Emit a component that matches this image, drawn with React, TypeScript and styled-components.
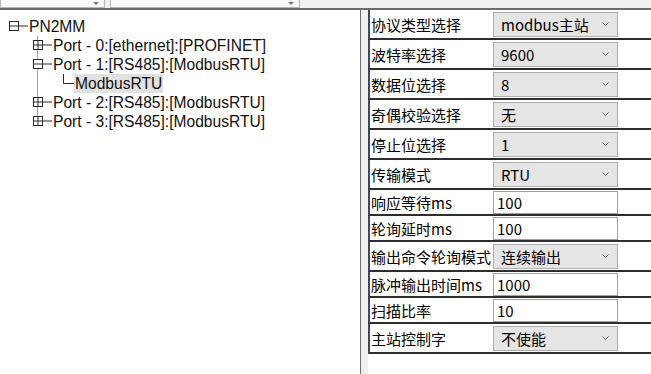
import React from "react";
import styled, { createGlobalStyle } from "styled-components";

const GlobalStyle = createGlobalStyle`
html, body {
  margin: 0;
  padding: 0;
  background: #f0f0f0;
}
body {
  width: 651px;
  height: 374px;
  overflow: hidden;
  font-family: "Noto Sans CJK SC", "Noto Sans", sans-serif;
  color: #000;
}
`

const Window = styled.div`
width: 651px;
height: 374px;
display: flex;
flex-direction: column;
background: #f0f0f0;
`

const TopBar = styled.div`
height: 8px;
display: flex;
gap: 5px;
border-bottom: 2px solid #6d6d6d;
`

const StubCombo = styled.div<{ $w: number }>`
width: ${p => p.$w}px;
height: 8px;
box-sizing: border-box;
background: #fafafa;
border: 1px solid #b4b4b4;
border-top: none;
display: flex;
justify-content: flex-end;
align-items: center;
padding-right: 5px;
`

const StubArrow = styled.span`
width: 0;
height: 0;
border-left: 3px solid transparent;
border-right: 3px solid transparent;
border-top: 3px solid #777;
`

const Body = styled.div`
flex: 1;
display: flex;
min-height: 0;
`

const LeftPanel = styled.div`
width: 361px;
box-sizing: border-box;
background: #fff;
border-right: 1px solid #6d6d6d;
padding-top: 7px;
`

const Splitter = styled.div`
width: 7px;
background: #f0f0f0;
`

const RightPanel = styled.div`
flex: 1;
background: #fff;
display: flex;
flex-direction: column;
`

const TreeRow = styled.div<{ $indent: number }>`
position: relative;
height: 19px;
display: flex;
align-items: center;
padding-left: ${p => p.$indent}px;
font-family: "Liberation Sans", Arial, sans-serif;
font-size: 15.6px;
line-height: 19px;
white-space: nowrap;
color: #111;
`

const TreeLabel = styled.span<{ $selected?: boolean }>`
height: 19px;
padding: 0 1px;
background: ${p => (p.$selected ? "#e1e1e1" : "transparent")};
`

const Children = styled.div`
position: relative;
&::before {
  content: "";
  position: absolute;
  left: 37px;
  top: 0;
  bottom: 9px;
  width: 1px;
  background: #a0a0a0;
}
`

const Expander = ({ open }: { open: boolean }) => (
  <svg width="19" height="19" viewBox="0 0 19 19" style={{ display: "block", flex: "none" }}>
    <rect x="0.5" y="4.5" width="9" height="9" fill="#fff" stroke="#2a2a2a" />
    <line x1="0.5" y1="9" x2="19" y2="9" stroke="#2a2a2a" />
    {!open && <line x1="5" y1="4.5" x2="5" y2="13.5" stroke="#2a2a2a" />}
  </svg>
);

const Elbow = () => (
  <svg width="11" height="19" viewBox="0 0 11 19" style={{ display: "block", flex: "none" }}>
    <polyline points="0.5,0 0.5,9.5 11,9.5" fill="none" stroke="#2a2a2a" />
  </svg>
);

const PropRow = styled.div<{ $h: number }>`
height: ${p => p.$h}px;
box-sizing: border-box;
display: grid;
grid-template-columns: 123px 125px 1fr;
align-items: center;
border-left: 2px solid #3e4a63;
border-bottom: 2px solid #2e2e2e;
`

const PropLabel = styled.div`
padding-left: 1px;
font-size: 15px;
white-space: nowrap;
overflow: hidden;
`

const Combo = styled.div`
height: 25px;
box-sizing: border-box;
background: #e5e5e5;
border: 1px solid #adadad;
display: flex;
align-items: center;
justify-content: space-between;
padding: 0 8px 0 7px;
font-size: 15px;
`

const TextBox = styled.div`
height: 23px;
box-sizing: border-box;
background: #fff;
border: 1px solid #a2a2a2;
display: flex;
align-items: center;
padding-left: 3px;
font-size: 15px;
`

const Chevron = () => (
  <svg width="7" height="5" viewBox="0 0 7 5" style={{ display: "block" }}>
    <polyline points="0.5,0.5 3.5,3.5 6.5,0.5" fill="none" stroke="#606060" />
  </svg>
);

type Prop = { label: string; value: string; kind: "combo" | "text" };

const props: Prop[] = [
  { label: "协议类型选择", value: "modbus主站", kind: "combo" },
  { label: "波特率选择", value: "9600", kind: "combo" },
  { label: "数据位选择", value: "8", kind: "combo" },
  { label: "奇偶校验选择", value: "无", kind: "combo" },
  { label: "停止位选择", value: "1", kind: "combo" },
  { label: "传输模式", value: "RTU", kind: "combo" },
  { label: "响应等待ms", value: "100", kind: "text" },
  { label: "轮询延时ms", value: "100", kind: "text" },
  { label: "输出命令轮询模式", value: "连续输出", kind: "combo" },
  { label: "脉冲输出时间ms", value: "1000", kind: "text" },
  { label: "扫描比率", value: "10", kind: "text" },
  { label: "主站控制字", value: "不使能", kind: "combo" },
];

const ports = [
  { name: "Port - 0:[ethernet]:[PROFINET]", open: false },
  { name: "Port - 1:[RS485]:[ModbusRTU]", open: true },
  { name: "Port - 2:[RS485]:[ModbusRTU]", open: false },
  { name: "Port - 3:[RS485]:[ModbusRTU]", open: false },
];

const App: React.FunctionComponent<{}> = () => {
  return (
    <>
      <GlobalStyle />
      <Window>
        <TopBar>
          <StubCombo $w={105}><StubArrow /></StubCombo>
          <StubCombo $w={190}><StubArrow /></StubCombo>
        </TopBar>
        <Body>
          <LeftPanel>
            <TreeRow $indent={9}>
              <Expander open />
              <TreeLabel>PN2MM</TreeLabel>
            </TreeRow>
            <Children>
              {ports.map(port => (
                <React.Fragment key={port.name}>
                  <TreeRow $indent={33}>
                    <Expander open={port.open} />
                    <TreeLabel>{port.name}</TreeLabel>
                  </TreeRow>
                  {port.open && (
                    <TreeRow $indent={63}>
                      <Elbow />
                      <TreeLabel $selected>ModbusRTU</TreeLabel>
                    </TreeRow>
                  )}
                </React.Fragment>
              ))}
            </Children>
          </LeftPanel>
          <Splitter />
          <RightPanel>
            {props.map(p => (
              <PropRow key={p.label} $h={p.kind === "combo" ? 30 : 26}>
                <PropLabel>{p.label}</PropLabel>
                {p.kind === "combo" ? (
                  <Combo>
                    <span>{p.value}</span>
                    <Chevron />
                  </Combo>
                ) : (
                  <TextBox>{p.value}</TextBox>
                )}
              </PropRow>
            ))}
          </RightPanel>
        </Body>
      </Window>
    </>
  );
};

export default App;
